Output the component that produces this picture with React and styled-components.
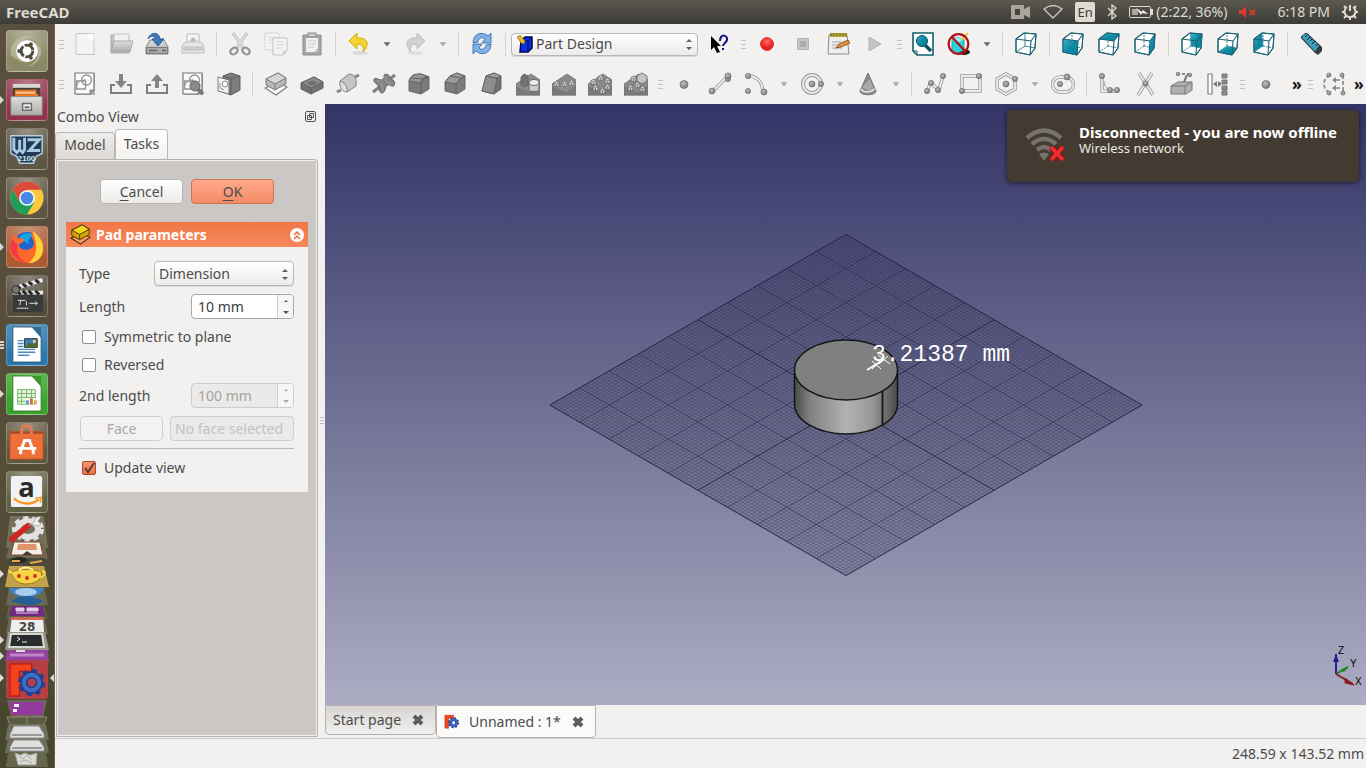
import { useState } from "react";
import styled, { createGlobalStyle, css } from "styled-components";

const GlobalStyle = createGlobalStyle`
  * {
    box-sizing: border-box;
  }

  body {
    margin: 0;
    font-family: "Noto Sans", "Open Sans", sans-serif;
    font-size: 14px;
    line-height: 20px;
    color: #4c4c4c;
    background: #f2f1f0;
  }

  button, input, select {
    font: inherit;
    color: inherit;
  }
`;

const Page = styled.div`
  display: flex;
  flex-direction: column;
  height: 100vh;
  overflow: hidden;
`;

const Desktop = styled.div`
  display: flex;
  flex: 1;
  min-height: 0;
`;

const Main = styled.main`
  display: flex;
  flex-direction: column;
  flex: 1;
  min-width: 0;
`;

/* ---------- top panel ---------- */

const TopBar = styled.header`
  display: flex;
  align-items: center;
  justify-content: space-between;
  height: 24px;
  padding: 0 8px 0 6px;
  color: #dfdbd2;
  background: linear-gradient(#5b594f, #3c3b37);
`;

const AppTitle = styled.h1`
  margin: 0;
  font-size: 15px;
  line-height: 24px;
`;

const Indicators = styled.div`
  display: flex;
  align-items: center;
  gap: 12px;
`;

const Indicator = styled.div`
  display: flex;
  align-items: center;
  gap: 3px;

  svg {
    display: block;
  }
`;

const Clock = styled.time`
  margin-left: 8px;
`;

const LanguageBadge = styled.span`
  width: 20px;
  border-radius: 2px;
  text-align: center;
  font-size: 13px;
  color: #3c3b37;
  background: #dfdbd2;
`;

/* ---------- launcher ---------- */

const Launcher = styled.nav`
  display: flex;
  flex-direction: column;
  gap: 2px;
  width: 55px;
  flex-shrink: 0;
  padding-top: 6px;
  overflow: hidden;
  border-right: 1px solid #7b5a55;
  background: linear-gradient(#5a4f3e, #564d39 60%, #45462c);
`;

const LauncherList = styled.div`
  display: flex;
  flex-direction: column;
  gap: 7px;
`;

const LauncherRow = styled.div`
  display: flex;
  align-items: center;
  height: 42px;
`;

const RunningMark = styled.span`
  width: 6px;
  height: 8px;
  line-height: 0;
`;

const Tile = styled.button`
  width: 42px;
  height: 42px;
  padding: 0;
  border: 1px solid rgba(255, 255, 255, 0.22);
  border-radius: 4px;
  background: radial-gradient(circle at 50% 0, rgba(255, 255, 255, 0.35), transparent 75%) ${(p) => p.$color};

  svg {
    display: block;
    overflow: visible;
  }
`;

const Folded = styled.button`
  display: block;
  width: 54px;
  height: ${(p) => p.$height}px;
  padding: 0;
  border: 0;
  background: none;

  svg {
    display: block;
    overflow: visible;
  }
`;

/* ---------- tool bars ---------- */

const ToolRow = styled.div`
  display: flex;
  align-items: center;
  height: 40px;
  flex-shrink: 0;
  overflow: hidden;
`;

const ToolSection = styled.div`
  display: flex;
  align-items: center;
  flex: ${(p) => (p.$grow ? "1" : "none")};
  min-width: 0;
`;

const ToolButton = styled.button`
  display: flex;
  align-items: center;
  justify-content: center;
  width: ${(p) => (p.$narrow ? "20px" : "36px")};
  height: 36px;
  flex-shrink: 0;
  padding: 0;
  border: 0;
  background: none;
`;

const Grip = styled.span`
  width: 12px;
  height: 9px;
  flex-shrink: 0;
  border: solid transparent;
  border-width: 0 3px 0 4px;
  background: repeating-linear-gradient(#c5c3c1 0 1px, transparent 1px 4px) padding-box;
`;

const Separator = styled.span`
  width: 1px;
  height: 24px;
  margin: 0 5px;
  flex-shrink: 0;
  background: #d3d1cf;
`;

const MoreButton = styled.button`
  width: 14px;
  margin-left: auto;
  padding: 0;
  border: 0;
  font-size: 16px;
  font-weight: bold;
  color: #111;
  background: none;
`;

const raised = css`
  border: 1px solid #b9b6b3;
  border-radius: 4px;
  background: linear-gradient(#ffffff, #ecebe9);
`;

const SelectFrame = styled.div`
  display: flex;
  align-items: center;
  width: ${(p) => p.$width}px;
  height: 25px;
  padding: 0 4px;
  ${raised}
  box-shadow: 0 1px 0 rgba(0, 0, 0, 0.1);

  svg {
    flex-shrink: 0;
  }
`;

const WorkbenchFrame = styled(SelectFrame)`
  margin-right: 3px;
  height: 23px;
`;

const Select = styled.select`
  flex: 1;
  min-width: 0;
  height: 20px;
  padding: 0;
  border: 0;
  appearance: none;
  outline: none;
  background: none;
`;

/* ---------- combo view ---------- */

const Workspace = styled.div`
  display: flex;
  flex: 1;
  min-height: 0;
`;

const ComboView = styled.aside`
  display: flex;
  flex-direction: column;
  width: 263px;
  flex-shrink: 0;
`;

const ComboTitle = styled.div`
  display: flex;
  align-items: center;
  justify-content: space-between;
  height: 25px;
  padding: 0 2px;

  button {
    padding: 0;
    border: 0;
    background: none;
    line-height: 0;
  }
`;

const TabList = styled.div`
  display: flex;
  align-items: flex-end;
  height: 30px;
`;

const PanelTab = styled.button`
  height: ${(p) => (p.$active ? "30px" : "27px")};
  width: ${(p) => (p.$active ? "53px" : "60px")};
  padding: 0 0 2px;
  border: 1px solid #bab7b4;
  border-bottom: 0;
  border-radius: 4px 4px 0 0;
  background: ${(p) => (p.$active ? "linear-gradient(#fff, #f2f1f0)" : "linear-gradient(#efedeb, #dbd8d6)")};
`;

const TaskPane = styled.div`
  flex: 1;
  margin: 0 0 1px 1px;
  padding: 19px 9px;
  border: 1px solid #b5b2af;
  border-top-right-radius: 3px;
  box-shadow: inset 0 0 0 1px #efeeec;
  background: #cac7c4;
`;

const ButtonRow = styled.div`
  display: flex;
  justify-content: center;
  gap: 8px;
  margin-bottom: 18px;
`;

const PushButton = styled.button`
  width: 83px;
  height: 25px;
  padding: 0;
  line-height: 20px;
  ${raised}

  ${(p) =>
    p.$primary &&
    css`
      border-color: #cc7554;
      background: linear-gradient(#ffa98a, #f48c65);
    `}

  &:disabled {
    color: #a9a7a5;
    border-color: #d0cecc;
    background: #f3f2f1;
  }
`;

const Mnemonic = styled.span`
  text-decoration: underline;
  text-underline-offset: 3px;
`;

const TaskBox = styled.section`
  background: #f2f1f0;
`;

const TaskHeader = styled.div`
  display: flex;
  align-items: center;
  gap: 5px;
  height: 25px;
  padding: 0 3px 0 4px;
  color: #fff;
  background: linear-gradient(#f07746, #f6895d);

  h2 {
    flex: 1;
    margin: 0;
    font-size: 14px;
  }

  button {
    padding: 0;
    border: 0;
    background: none;
    line-height: 0;
  }
`;

const Form = styled.form`
  display: flex;
  flex-direction: column;
  gap: 8px;
  padding: 14px 14px 14px 13px;
`;

const Field = styled.div`
  display: flex;
  align-items: center;
  justify-content: space-between;
  height: 25px;
`;

const CheckList = styled.div`
  display: flex;
  flex-direction: column;
  gap: 8px;
`;

const CheckLabel = styled.label`
  display: flex;
  align-items: center;
  gap: 8px;
  height: 20px;
  padding-left: 3px;
`;

const CheckBox = styled.input`
  width: 14px;
  height: 14px;
  margin: 0;
  appearance: none;
  border: 1px solid #8f8c89;
  border-radius: 2px;
  background: #fff;

  &:checked {
    border-color: #a1492a;
    background: url("data:image/svg+xml,%3Csvg xmlns='http://www.w3.org/2000/svg' viewBox='0 0 12 12'%3E%3Cpath d='M2 6l3 4 6-9' fill='none' stroke='%23503a32' stroke-width='2'/%3E%3C/svg%3E"),
      linear-gradient(#f99470, #ee7141);
  }
`;

const SpinFrame = styled.div`
  display: flex;
  width: 103px;
  height: 25px;
  overflow: hidden;
  border: 1px solid ${(p) => (p.$disabled ? "#cfccca" : "#aaa7a4")};
  border-radius: 4px;
  color: ${(p) => (p.$disabled ? "#a5a3a1" : "#3c3c3c")};
  background: ${(p) => (p.$disabled ? "#ebeae8" : "#fff")};
`;

const SpinInput = styled.input`
  flex: 1;
  min-width: 0;
  padding: 0 6px;
  border: 0;
  outline: none;
  background: none;
`;

const SpinButtons = styled.div`
  display: flex;
  flex-direction: column;
  width: 16px;
  border-left: 1px solid #d0cecc;
  background: #f7f6f5;

  button {
    flex: 1;
    padding: 0;
    border: 0;
    background: none;
    line-height: 0;
    min-height: 0;
  }
`;

const FaceRow = styled.div`
  display: flex;
  justify-content: space-between;
  padding-left: 1px;
`;

const FaceInput = styled.input`
  width: 124px;
  height: 25px;
  padding: 0 4px;
  border: 1px solid #cfccca;
  border-radius: 4px;
  background: #ebeae8;

  &::placeholder {
    color: #c3c1bf;
    opacity: 1;
  }
`;

const Rule = styled.hr`
  width: 100%;
  margin: -1px 0 1px;
  border: 0;
  border-top: 1px solid #bcb9b6;
`;

const Splitter = styled.div`
  display: flex;
  align-items: center;
  width: 7px;
  flex-shrink: 0;
`;

const SplitterGrip = styled.span`
  width: 4px;
  height: 8px;
  margin-left: 2px;
  background: repeating-linear-gradient(#c5c3c1 0 1px, transparent 1px 3px);
`;

/* ---------- 3D view ---------- */

const Documents = styled.div`
  display: flex;
  flex-direction: column;
  flex: 1;
  min-width: 0;
`;

const Viewport = styled.div`
  position: relative;
  display: flex;
  align-items: center;
  justify-content: center;
  flex: 1;
  min-height: 0;
  background: linear-gradient(#333366, #acacc3);
`;

const AxisCross = styled.svg`
  position: absolute;
  right: 0;
  bottom: 14px;
`;

const Notification = styled.div`
  position: absolute;
  top: 6px;
  right: 7px;
  display: flex;
  gap: 12px;
  width: 352px;
  height: 72px;
  padding: 14px 18px;
  border-radius: 5px;
  color: #e8e6e2;
  background: #433b32;
  box-shadow: 0 1px 5px rgba(0, 0, 0, 0.6);

  strong {
    display: block;
    font-size: 15px;
    line-height: 17px;
    color: #fff;
    white-space: nowrap;
  }

  p {
    margin: 0;
    font-size: 13px;
    line-height: 15px;
  }
`;

const DocumentTabs = styled.div`
  display: flex;
  height: 33px;
  flex-shrink: 0;
`;

const DocumentTab = styled.div`
  display: flex;
  align-items: center;
  gap: 10px;
  height: ${(p) => (p.$active ? "33px" : "30px")};
  padding: 0 10px 0 7px;
  border: 1px solid #b5b2af;
  border-radius: 0 0 4px 4px;
  background: ${(p) => (p.$active ? "#fafaf9" : "linear-gradient(#d8d5d3, #f0efed)")};

  button {
    display: flex;
    align-items: center;
    gap: 10px;
    padding: 0;
    border: 0;
    background: none;
    white-space: nowrap;
  }
`;

const StatusBar = styled.footer`
  height: 30px;
  flex-shrink: 0;
  padding: 5px 2px 0 0;
  border-top: 1px solid #d0cecc;
  text-align: right;
`;

/* ---------- tool bar drawings ---------- */

const FRONT = "2,7 17,9 16,23 2,20";
const REAR = "10,1 22,2 21,16 11,14";
const CUBE_SIDES = {
  none: "",
  front: FRONT,
  top: "2,7 17,9 22,2 10,1",
  right: "17,9 22,2 21,16 16,23",
  rear: REAR,
  bottom: "2,20 16,23 21,16 11,14",
  left: "2,7 10,1 11,14 2,20",
};

function ViewCube({ side }) {
  return (
    <g fill="none" stroke="#1c6375">
      <path d="M2 7 10 1 22 2 21 16 16 23 2 20z" fill="#fff" />
      <path d="M11 14V1M11 14 21 16M11 14 2 20" strokeWidth="0.8" strokeDasharray={side === "none" ? "none" : "2 1"} />
      <polygon points={CUBE_SIDES[side]} fill="url(#teal)" stroke="none" />
      <path d="M2 7 17 9 16 23M17 9 22 2M2 7 10 1 22 2 21 16 16 23 2 20z" strokeWidth="1.1" />
    </g>
  );
}

function Node({ x, y, r = 2.6 }) {
  return <circle cx={x} cy={y} r={r} fill="url(#node)" stroke="#747474" strokeWidth="0.8" />;
}

// double stroke: dark outline with a pale core
function Tube({ d }) {
  return (
    <g fill="none">
      <path d={d} stroke="#999" strokeWidth="3.4" />
      <path d={d} stroke="#ececeb" strokeWidth="1.8" />
    </g>
  );
}

function SketchPage() {
  return (
    <g>
      <path d="M3 2h19v21H3z" fill="#b5b5b5" />
      <path d="M2 1h19v17l-4 4H2z" fill="#fbfbfb" stroke="#777" strokeWidth="1.2" />
      <path d="M17 22v-4h4z" fill="#aaa" stroke="#777" strokeWidth="0.8" />
      <g fill="none" stroke="#949494" strokeWidth="1.3">
        <circle cx="13.5" cy="8" r="5" />
        <path d="M3.5 9h9v8h-9zM3.5 17c0-7 3-9 9-9" />
      </g>
    </g>
  );
}

function DarkBlock() {
  return (
    <g stroke="#6f6f6f" strokeWidth="0.8" strokeLinejoin="round">
      <path d="M0 12 15 2l9 6v15H0z" fill="#8b8b8b" />
      <path d="m0 15 14 6 10-7v9H0z" fill="#7a7a7a" stroke="#757575" />
    </g>
  );
}

function SmallCube({ x, y }) {
  return (
    <g transform={`translate(${x} ${y})`} stroke="#646464" strokeWidth="0.7">
      <path d="M0 1.5 2.5 0 5 1.5v3L2.5 6 0 4.5z" fill="#d2d2d2" />
      <path d="M0 1.5 2.5 3 5 1.5M2.5 3v3" fill="none" />
    </g>
  );
}

function PadShape({ light, side, line, base }) {
  return (
    <g stroke={line} strokeLinejoin="round">
      <path d="M1 16 12 23 23 15 14 11z" fill={base} strokeWidth="1.2" />
      <path d="M2 7 14 1 22 6v6l-11 6-9-5z" fill={side} />
      <path d="M2 7 14 1 22 6 11 12z" fill={light} />
      <path d="M11 12v6" />
    </g>
  );
}

const icons = {
  newFile: (
    <g>
      <path d="M3 21h19v2H3z" fill="#e2e1e0" />
      <path d="M3 1.5h18v21H3z" fill="#f3f3f2" stroke="#c8c7c5" />
      <circle cx="18" cy="5" r="3.5" fill="#fff" opacity="0.8" />
    </g>
  ),
  open: (
    <g stroke="#aaa">
      <path d="M2 3h7l2 2h9v16H2z" fill="#c0c0c0" />
      <path d="M5 2h15v9H5z" fill="#f1f1f0" stroke="#c2c2c2" />
      <path d="M5 9h19l-3 11H2z" fill="url(#metal)" />
    </g>
  ),
  save: (
    <g>
      <path d="M1 15 5 8h14l4 7v7H1z" fill="url(#metal)" stroke="#858585" />
      <path d="M1.5 15.5h21v6h-21z" fill="#aaa" stroke="#7a7a7a" />
      <path d="M4 18.5h8M17 18.5h4" stroke="#666" strokeWidth="1.6" />
      <path d="M3 7C5 0 14-1 15 7h4l-6 7-6-7h3c0-3-4-4-7 0z" fill="#3f7ab9" stroke="#285a95" />
    </g>
  ),
  print: (
    <g stroke="#bcbbb9">
      <path d="M6 2h12v11H6z" fill="#f5f5f4" />
      <path d="m12 5 4 4h-3v4h-2V9H8z" fill="#bcbbb9" stroke="none" />
      <path d="m1 14 3-4h16l3 4v7H1z" fill="#e7e6e5" />
      <path d="M3 15h18v3H3z" fill="#d0d0cf" />
    </g>
  ),
  cut: (
    <g fill="none">
      <path d="M5 1 16 17M19 1 8 17" stroke="#aaa" strokeWidth="3" />
      <path d="M5 1 16 17M19 1 8 17" stroke="#e4e4e4" strokeWidth="1.6" />
      <ellipse cx="6" cy="19" rx="4" ry="3" stroke="#939393" strokeWidth="2.2" transform="rotate(-35 6 19)" />
      <ellipse cx="18" cy="19" rx="4" ry="3" stroke="#939393" strokeWidth="2.2" transform="rotate(35 18 19)" />
    </g>
  ),
  copy: (
    <g fill="#f4f4f3" stroke="#d6d5d3">
      <path d="M1 1h14v17H1z" />
      <path d="M4 5h8M4 8h8M4 11h8" />
      <path d="M9 6h14v13l-4 4H9z" stroke="#c2c1bf" />
      <path d="M12 10h8M12 13h8M12 16h6" />
      <path d="M19 23v-4h4" fill="#ccc" />
    </g>
  ),
  paste: (
    <g>
      <path d="M3 3h18v20H3z" fill="#a7a7a7" stroke="#8c8c8c" />
      <path d="M6 6h12v14H6z" fill="#efefee" />
      <path d="M8 1h8v4H8z" fill="#c8c8c8" stroke="#888" />
      <path d="M8 9h8M8 12h8M8 15h6" stroke="#ccc" />
      <path d="M14 20h4v-4z" fill="#c0c0c0" />
    </g>
  ),
  undo: (
    <g>
      <ellipse cx="13" cy="21" rx="8" ry="2" fill="#dddbd9" />
      <path d="M10 1v5c11-1 13 7 6 14 1-5 0-8-6-8v5L2 9z" fill="#f3d532" stroke="#d0ab13" strokeLinejoin="round" />
    </g>
  ),
  redo: (
    <g>
      <ellipse cx="12" cy="21" rx="8" ry="2" fill="#e0dfde" />
      <path d="M14 1v5C3 5 1 13 8 20c-1-5 0-8 6-8v5l8-8z" fill="#d2d1d0" stroke="#c0bfbe" strokeLinejoin="round" />
    </g>
  ),
  caret: <path d="M8 10h8l-4 5z" fill="#666" />,
  caretOff: <path d="M8 10h8l-4 5z" fill="#aaa9a8" />,
  refresh: (
    <g fill="#7fb0e6" stroke="#3a71b0" strokeWidth="0.9" strokeLinejoin="round">
      <path d="M3 11C3 1 13-1 18 4l3-3v10h-9l3-4c-3-3-7 0-7 3z" />
      <path d="M21 12c0 10-10 12-15 7l-3 3V12h9l-3 4c3 3 7 0 7-3z" />
    </g>
  ),
  whatsThis: (
    <g>
      <path d="M4 4v14l3-3 3 6 3-1-3-6h4z" fill="#000" />
      <path d="M13 9c0-8 8-6 7-1-.5 3-4 3-4 6M16 16v2" fill="none" stroke="#10108a" strokeWidth="2" />
    </g>
  ),
  record: <circle cx="12" cy="12" r="6.5" fill="url(#record)" stroke="#df3e3e" />,
  stop: (
    <g>
      <path d="M6.5 6.500h11v11h-11z" fill="#c6c5c4" stroke="#b4b3b2" />
      <path d="M9 9h6v6H9z" fill="#aeadac" />
    </g>
  ),
  macro: (
    <g>
      <path d="m2 3-1 19h21L20 3z" fill="#eeeeed" stroke="#8a8a88" />
      <path d="M3 1h17v4H3z" fill="#b8a437" />
      <path d="M4 1v3M7 1v3M10 1v3M13 1v3M16 1v3M19 1v3" stroke="#716423" />
      <path d="M5 10h9M5 13h6M5 16h10" stroke="#aaa" />
      <path d="m9 16 3-4 9-4 2 3-9 4z" fill="#e5953c" stroke="#744214" strokeWidth="0.8" />
    </g>
  ),
  play: <path d="M6 5v14l12-7z" fill="#c6c5c4" stroke="#b4b3b2" />,
  fitAll: (
    <g>
      <path d="M2 1h20v22H6l-4-4z" fill="#fff" stroke="#145d70" strokeWidth="1.6" />
      <path d="M2 19h4v4" fill="none" stroke="#145d70" />
      <path d="m14 13 6 6" stroke="#0b5264" strokeWidth="3.5" />
      <circle cx="11" cy="9" r="5.500" fill="url(#teal)" stroke="#0b5264" />
    </g>
  ),
  drawStyle: (
    <g>
      <ellipse cx="17" cy="20" rx="6" ry="3" fill="#222" />
      <path d="M5 8 9 5l8 2v11l-6 3-6-3z" fill="#29d4dd" stroke="#1b9299" strokeWidth="0.8" />
      <path d="M5 8 9 5l8 2-5 3z" fill="#9ceef2" />
      <path d="m14 8 7-7" stroke="#eacb35" strokeWidth="2" />
      <circle cx="11.500" cy="12" r="9.800" fill="none" stroke="#b51015" strokeWidth="2.2" />
      <path d="M5 5 18 19" stroke="#b51015" strokeWidth="2.2" />
    </g>
  ),
  measure: (
    <g strokeLinejoin="round">
      <path d="m2 6 14 15 3 2 4-4V15L8 1z" fill="#343c3e" />
      <path d="M2 5 7 1l14 13-5 6z" fill="#3f9cba" stroke="#1b4652" />
      <path d="m8 3-2 2m5 0-3 3m5-1-2 2m5 0-3 3m6 0-2 2m4 0-3 3" stroke="#123" />
    </g>
  ),
  sketch: <SketchPage />,
  importTray: (
    <g>
      <path d="M6 13H2v8h20v-8h-4" fill="none" stroke="#7e7e7e" strokeWidth="2" />
      <path d="M10 2h4v7h4l-6 7-6-7h4z" fill="#858585" />
    </g>
  ),
  exportTray: (
    <g>
      <path d="M6 13H2v8h20v-8h-4" fill="none" stroke="#7e7e7e" strokeWidth="2" />
      <path d="M10 16h4V9h4l-6-7-6 7h4z" fill="#858585" />
    </g>
  ),
  viewSketch: (
    <g>
      <SketchPage />
      <path d="m17 17 5 5" stroke="#777" strokeWidth="3.5" />
      <circle cx="14" cy="14" r="5" fill="#8b8b8b" stroke="#666" />
    </g>
  ),
  mapSketch: (
    <g strokeLinejoin="round">
      <path d="M6 4 14 1l9 3v14l-9 5-8-3z" fill="#7d7d7d" stroke="#5f5f5f" />
      <path d="M6 4l8 3 9-3M14 7v16" fill="none" stroke="#5f5f5f" />
      <path d="M1 5 12 8v14L1 19z" fill="#f5f5f5" stroke="#777" />
      <circle cx="8" cy="12" r="3" fill="none" stroke="#8d8d8d" />
      <path d="M3 11v5l4 2" fill="none" stroke="#8d8d8d" />
    </g>
  ),
  pad: <PadShape light="#d5d5d5" side="#b7b7b7" line="#7b7b7b" base="#fff" />,
  pocket: (
    <g stroke="#606060" strokeLinejoin="round">
      <path d="m1 11 13-6 9 5v6l-12 6-10-5z" fill="#727272" />
      <path d="m1 11 13-6 9 5-12 6z" fill="#8c8c8c" />
      <path d="m8 11 5-2 3 2-5 2z" fill="#707070" stroke="#666" />
      <path d="M11 16v6" />
    </g>
  ),
  revolution: (
    <g>
      <path d="m1 20 4-2M19 5l4-2" stroke="#868686" strokeWidth="3" />
      <path d="M4 9 13 2c6 0 8 5 7 12l-9 6c-1-6-2-9-7-11z" fill="#c5c5c5" stroke="#838383" />
      <path d="M4 9c-1 7 3 11 7 11 1-6-2-9-7-11z" fill="#dedede" stroke="#838383" />
    </g>
  ),
  groove: (
    <g stroke="#606060">
      <path d="m1 20 22-17" strokeWidth="3" stroke="#808080" />
      <path d="M12 3c5-3 5 3 10 6 2 4-1 7-4 4-2 0-4-1-5 5-3 6-6 2-6-3-1-3-6-4-5-8 2-2 4 1 7 1 4-1 3-4 3-5z" fill="#858585" />
      <path d="M5 8c3 1 6 5 6 11M13 4c0 4 3 8 7 9" fill="none" stroke="#a4a4a4" />
    </g>
  ),
  fillet: (
    <g stroke="#606060" strokeWidth="0.9" strokeLinejoin="round">
      <path d="M1 9C3 3 6 2 13 2l8 3v12l-8 5-12-3z" fill="#7a7a7a" />
      <path d="M1 9C3 3 6 2 13 2l8 3c-5 0-7 1-8 6z" fill="#969696" />
      <path d="M13 11v11M3 6l13 1M21 5c-5 0-7 1-8 6" fill="none" />
    </g>
  ),
  chamfer: (
    <g stroke="#606060" strokeWidth="0.9" strokeLinejoin="round">
      <path d="M1 10 6 4l7-3 8 3v13l-8 5-12-3z" fill="#7b7b7b" />
      <path d="m1 10 5-6 7-3 8 3-4 2-5 6z" fill="#999" />
      <path d="M12 12v10M6 4l11 2 4-2M17 6l-5 6" fill="none" />
    </g>
  ),
  draft: (
    <g stroke="#606060" strokeWidth="0.9" strokeLinejoin="round">
      <path d="M6 4 14 1l7 3v13l-7 5-12-3z" fill="#727272" />
      <path d="m6 4 11 2-3 16-12-3z" fill="#8d8d8d" />
      <path d="m6 4 8-3 7 3-4 2z" fill="#a1a1a1" />
    </g>
  ),
  mirrored: (
    <g stroke="#606060" strokeWidth="0.9">
      <DarkBlock />
      <path d="M5 5 8 2l4 2v9l-3 2-4-2z" fill="#737373" />
      <path d="M13 11v7c0 2 10 2 10 0v-7" fill="#cbcbcb" />
      <ellipse cx="18" cy="10.500" rx="5" ry="3" fill="#ececec" />
    </g>
  ),
  linear: (
    <g>
      <DarkBlock />
      <SmallCube x={2} y={9} />
      <SmallCube x={10} y={9} />
      <SmallCube x={17} y={8} />
    </g>
  ),
  polar: (
    <g>
      <DarkBlock />
      <SmallCube x={3} y={7} />
      <SmallCube x={10} y={3} />
      <SmallCube x={17} y={6} />
      <SmallCube x={5} y={13} />
      <SmallCube x={12} y={16} />
      <SmallCube x={17} y={12} />
    </g>
  ),
  multi: (
    <g>
      <DarkBlock />
      <path d="m13 4 5-3 5 3v5l-5 3-5-3z" fill="#c4c4c4" stroke="#777" />
      <SmallCube x={7} y={4} />
      <SmallCube x={4} y={13} />
      <SmallCube x={11} y={10} />
      <SmallCube x={16} y={14} />
    </g>
  ),
  point: <Node x={12} y={12.500} r={4} />,
  line: (
    <g>
      <Tube d="M4 20 20 4" />
      <Node x={4} y={19} r={3} />
      <Node x={20} y={7} />
      <Node x={20} y={4} r={3} />
    </g>
  ),
  arc: (
    <g>
      <Tube d="M4 4C12 4 18 9 19 19" />
      <Node x={4} y={4} />
      <Node x={4} y={19} />
      <Node x={20} y={20} r={3} />
    </g>
  ),
  circle: (
    <g>
      <circle cx="12" cy="12" r="9" fill="none" stroke="#999" strokeWidth="4" />
      <circle cx="12" cy="12" r="9" fill="none" stroke="#eee" strokeWidth="2" />
      <Node x={12} y={12} r={3} />
      <Node x={21} y={12} />
    </g>
  ),
  conic: (
    <g>
      <path d="M12 1 4 19c0 5 16 5 16 0z" fill="#8b8b8b" stroke="#757575" />
      <path d="m6 15 8 5 4-2-4-11z" fill="#a9a9a9" />
      <path d="M5 17c3 4 9 4 14 0" stroke="#eee" fill="none" strokeWidth="1.5" />
    </g>
  ),
  polyline: (
    <g>
      <Tube d="m4 19 4-8 8 7 4-14" />
      <Node x={4} y={19} />
      <Node x={8} y={11} />
      <Node x={15} y={18} />
      <Node x={20} y={4} />
    </g>
  ),
  rectangle: (
    <g>
      <Tube d="M3 4h18v15H3z" />
      <Node x={20} y={4} />
      <Node x={3} y={19} />
    </g>
  ),
  polygon: (
    <g>
      <Tube d="m11 2 9 5v10l-9 5-9-5V7z" />
      <Node x={11} y={12} r={3} />
      <Node x={20} y={7} />
    </g>
  ),
  slot: (
    <g>
      <Tube d="M9 5h6a7.500 7.500 0 0 1 0 15H9A7.500 7.500 0 0 1 9 5z" />
      <Node x={9} y={12} />
      <Node x={16} y={5} r={3} />
    </g>
  ),
  filletSketch: (
    <g>
      <Tube d="M4 3v16h17" />
      <path d="M6 9c0 6 4 9 11 9" fill="none" stroke="#999" />
      <Node x={4} y={4} />
      <Node x={12} y={18} />
      <Node x={19} y={18} />
    </g>
  ),
  trim: (
    <g>
      <Tube d="m5 1 14 22M18 1 4 23" />
      <Node x={11.500} y={11.500} />
    </g>
  ),
  external: (
    <g>
      <path d="M7 2h14" stroke="#888" strokeWidth="2" strokeDasharray="3 2" />
      <path d="m17 3-3 7" stroke="#777" strokeWidth="2" />
      <path d="m1 14 7-4h14v8l-6 4H1z" fill="#b1b1b1" stroke="#777" />
      <path d="M1 14h14l7-4M15 14v8" fill="none" stroke="#777" />
      <Node x={8} y={2} r={1.800} />
      <Node x={20} y={3} r={1.800} />
    </g>
  ),
  carbon: (
    <g>
      <path d="M2 2h4v20H2z" fill="#fff" stroke="#808080" strokeWidth="1.2" />
      <path d="m7 12 4-3v6zM16 12l-4-3v6z" fill="#777" />
      <path d="M16 2h5v4h-5zm0 6h5v4h-5zm0 6h5v4h-5zm0 5h5v4h-5z" fill="#8a8a8a" stroke="#757575" />
    </g>
  ),
  constraint: (
    <g>
      <path d="M8 3c-8 4-8 14 0 18M21 3v18" fill="none" stroke="#999" strokeWidth="2" strokeDasharray="4 2" />
      <path d="M11 8h7M11 16h7" stroke="#888" strokeWidth="1.500" />
      <path d="m10 8 4-3v6zm0 8 4-3v6z" fill="#888" />
      <Node x={7} y={3} r={2} />
      <Node x={20} y={3} r={2} />
      <Node x={7} y={21} r={2} />
      <Node x={21} y={21} r={2} />
    </g>
  ),
};

const mainTools = [
  "grip",
  ["newFile", "New"],
  ["open", "Open"],
  ["save", "Save"],
  ["print", "Print"],
  "sep",
  ["cut", "Cut"],
  ["copy", "Copy"],
  ["paste", "Paste"],
  "sep",
  ["undo", "Undo"],
  ["caret", "Undo list"],
  ["redo", "Redo"],
  ["caretOff", "Redo list"],
  "sep",
  ["refresh", "Refresh"],
  "sep",
];

const viewTools = [
  ["whatsThis", "What's this?"],
  "grip",
  ["record", "Record macro"],
  ["stop", "Stop macro"],
  ["macro", "Macros"],
  ["play", "Execute macro"],
  "grip",
  ["fitAll", "Fit all"],
  ["drawStyle", "Draw style"],
  ["caret", "Draw style list"],
  "sep",
  ["cube:none", "Axonometric"],
  "sep",
  ["cube:front", "Front"],
  ["cube:top", "Top"],
  ["cube:right", "Right"],
  "sep",
  ["cube:rear", "Rear"],
  ["cube:bottom", "Bottom"],
  ["cube:left", "Left"],
  "sep",
  ["measure", "Measure distance"],
];

const designTools = [
  "grip",
  ["sketch", "Create sketch"],
  ["importTray", "Edit sketch"],
  ["exportTray", "Leave sketch"],
  ["viewSketch", "View sketch"],
  ["mapSketch", "Map sketch to face"],
  "sep",
  ["pad", "Pad"],
  ["pocket", "Pocket"],
  ["revolution", "Revolution"],
  ["groove", "Groove"],
  ["fillet", "Fillet"],
  ["chamfer", "Chamfer"],
  ["draft", "Draft"],
  ["mirrored", "Mirrored"],
  ["linear", "Linear pattern"],
  ["polar", "Polar pattern"],
  ["multi", "Multi transform"],
  "grip",
  ["point", "Point"],
  ["line", "Line"],
  ["arc", "Arc"],
  ["caretOff", "Arc list"],
  ["circle", "Circle"],
  ["caretOff", "Circle list"],
  ["conic", "Conic"],
  ["caretOff", "Conic list"],
  "sep",
  ["polyline", "Polyline"],
  ["rectangle", "Rectangle"],
  ["polygon", "Polygon"],
  ["caretOff", "Polygon list"],
  ["slot", "Slot"],
  "sep",
  ["filletSketch", "Sketch fillet"],
  ["trim", "Trim edge"],
  ["external", "External geometry"],
  ["carbon", "Construction mode"],
  "grip",
  ["point", "Coincident"],
];

function Tools({ items }) {
  return items.map((item, index) => {
    if (item === "grip") return <Grip key={index} />;
    if (item === "sep") return <Separator key={index} />;
    const [name, label] = item;
    return (
      <ToolButton key={index} type="button" aria-label={label} $narrow={name.startsWith("caret")}>
        <svg width="24" height="24" viewBox="0 0 24 24">
          {name.startsWith("cube:") ? <ViewCube side={name.slice(5)} /> : icons[name]}
        </svg>
      </ToolButton>
    );
  });
}

/* ---------- launcher drawings ---------- */

function FreecadLogo({ size }) {
  return (
    <svg width={size} height={size} viewBox="0 0 36 36">
      <path d="M2 3h21v7H11v6h8v7h-8v11H2z" fill="#f5431f" stroke="#a31d12" />
      <g transform="translate(23 21)" fill="none">
        <circle r="7.500" stroke="#1b3f92" strokeWidth="7" />
        <circle r="11.500" stroke="#1b3f92" strokeWidth="3.500" strokeDasharray="4.500 4.530" />
        <circle r="7.500" stroke="#3f6cc4" strokeWidth="4" />
      </g>
    </svg>
  );
}

const apps = [
  {
    name: "Dash",
    color: "#8c8966",
    art: (
      <g>
        <path d="M4 24C2 8 20 0 32 9c-8-4-16-2-19 5 8-7 20-3 22 6 0-3 1 15-14 16 8-3 12-9 10-14-1 9-12 14-20 7-3-1-6-3-7-5z" fill="#c8c6ab" opacity="0.6" />
        <circle cx="20.500" cy="20.500" r="11" fill="#fff" />
        <circle cx="20.500" cy="20.500" r="6" fill="none" stroke="#504e3e" strokeWidth="3" strokeDasharray="11 1.570" />
        <circle cx="12.500" cy="20.500" r="2" fill="#504e3e" />
        <circle cx="24.500" cy="13.500" r="2" fill="#504e3e" />
        <circle cx="24.500" cy="27.500" r="2" fill="#504e3e" />
      </g>
    ),
  },
  {
    name: "Files",
    color: "#91324a",
    running: true,
    art: (
      <g>
        <path d="M6 4h28v7H6z" fill="#d7d7d6" />
        <path d="M6 8h28v10H6z" fill="#4b4038" />
        <path d="M8 10h22v4h2v5H8z" fill="#e87524" />
        <path d="M9 13h20" stroke="#f4c793" strokeWidth="2" />
        <path d="M4 17h32v19H4z" fill="url(#metal)" stroke="#8c8c8c" />
        <path d="M16 24h9v7h-9z" fill="#eee" stroke="#6b6b6b" strokeWidth="1.500" />
        <path d="M18 28h5" stroke="#666" strokeWidth="2" />
      </g>
    ),
  },
  {
    name: "Warzone 2100",
    color: "#5f5745",
    art: (
      <g>
        <path d="M4 7h32v18l-6 3-3 7H13l-3-7-6-3z" fill="#203b55" stroke="#b7cfdf" strokeWidth="1.500" />
        <path d="M7 9v12l3 3 3-3 3 3 2-3V9M13 11v9M21 11h12L23 22h11" fill="none" stroke="#a9cbe2" strokeWidth="3" />
        <text x="20" y="33" textAnchor="middle" fontFamily="Liberation Sans, sans-serif" fontWeight="bold" fontSize="8" fill="#d7e7f0">2100</text>
      </g>
    ),
  },
  {
    name: "Chrome",
    color: "#5f5745",
    art: (
      <g>
        <circle cx="20.500" cy="20.500" r="17" fill="#fbc93c" />
        <path d="M5.800 12A17 17 0 0 1 35.200 12H20.500L13 24.800z" fill="#dc4a3c" />
        <path d="M5.800 12A17 17 0 0 0 20.500 37.500L28 24.800H13z" fill="#1f9d5b" />
        <circle cx="20.500" cy="20.500" r="8" fill="#fff" />
        <circle cx="20.500" cy="20.500" r="6.500" fill="#4787e8" />
      </g>
    ),
  },
  {
    name: "Firefox",
    color: "#ab5c35",
    running: true,
    art: (
      <g>
        <circle cx="21" cy="20" r="15" fill="#2263cf" />
        <path d="M12 11c5-6 13-6 16-2-6 1-7 5-5 9z" fill="#17a6dd" />
        <path d="M5 12c2-1 2-3 2-5 2 1 4 4 5 5 4-2 6 1 5 3l-5 3c1 7 11 7 15 2 2-7-3-8-2-16 7 5 12 10 12 18 0 10-7 15-15 15C9 37 2 30 3 20z" fill="#ff6a28" />
        <path d="M26 4c7 5 11 10 11 18 0 8-6 15-15 15 8-6 11-16 4-33z" fill="#ffd13a" />
        <path d="M3 20c2 12 11 17 19 17-9-2-13-9-11-19L5 12z" fill="#ef3b4a" />
      </g>
    ),
  },
  {
    name: "Video editor",
    color: "#554c3c",
    art: (
      <g>
        <path d="M6 17h31v20H6z" fill="#393b3b" />
        <path d="m5 11 31-9 1 4L6 15z" fill="#e9e9e9" />
        <path d="m10 10 4 3m2-5 4 3m2-5 4 3m3-5 4 3" stroke="#292929" strokeWidth="3" />
        <path d="M6 15h31v4H6z" fill="#e9e9e9" />
        <path d="m10 15 4 4m2-4 4 4m2-4 4 4m3-4 4 4" stroke="#292929" strokeWidth="3" />
        <circle cx="9" cy="14" r="4" fill="#777" stroke="#282828" />
        <path d="M11 25h8m-5 0-1 5m7-4v4m3-2h8m-2-2 2 2-2 2M10 33h12" stroke="#ddd" fill="none" />
      </g>
    ),
  },
  {
    name: "LibreOffice Writer",
    color: "#2b78ad",
    stacked: true,
    art: (
      <g>
        <path d="M6 2h20l9 10v26H6z" fill="#fff" stroke="#29536f" />
        <path d="M25 2h10v11z" fill="#2f6c98" />
        <path d="M11 16h6m-6 3h6m-6 3h6m-6 3h18m-18 3h18m-18 3h12" stroke="#4a88bd" strokeWidth="1.500" />
        <path d="M18 14h13v9H18z" fill="#3b7fb8" stroke="#333" />
        <path d="m18 22 5-4 4 2 4-3v6H18z" fill="#4e6b31" />
        <circle cx="28" cy="17" r="1.500" fill="#ffd85d" />
      </g>
    ),
  },
  {
    name: "LibreOffice Calc",
    color: "#3aa32d",
    running: true,
    art: (
      <g>
        <path d="M6 2h20l9 10v26H6z" fill="#fff" stroke="#337c29" />
        <path d="M25 2h10v11z" fill="#38962d" />
        <path d="M11 16h18v15H11zM11 20h18M11 24h18M11 28h18M15 16v15M20 16v15M25 16v15" fill="#e9f6e5" stroke="#71b75e" />
        <path d="M19 25h12v6H19z" fill="#fff" />
        <path d="M21 31v-4" stroke="#6395d2" strokeWidth="3" />
        <path d="M25 31v-6" stroke="#ce704b" strokeWidth="3" />
        <path d="M29 31v-4" stroke="#e2a33d" strokeWidth="3" />
      </g>
    ),
  },
  {
    name: "Ubuntu Software",
    color: "#5f583f",
    art: (
      <g>
        <path d="M3 9h34v28H3z" fill="#ed7039" stroke="#c14d21" />
        <path d="M3 10h34" stroke="#a8482b" strokeWidth="2" fill="none" />
        <path d="M15 12V7q0-4 5-4t5 4v5" stroke="#e57855" strokeWidth="3" fill="none" />
        <path d="M14 32v-3l4-11h5l4 11v3M11 26h19" fill="none" stroke="#fff" strokeWidth="3" />
      </g>
    ),
  },
  {
    name: "Amazon",
    color: "#606044",
    art: (
      <g>
        <rect x="4" y="4" width="32" height="32" rx="2" fill="#f2f2f2" />
        <text x="20" y="26" textAnchor="middle" fontFamily="Open Sans, sans-serif" fontWeight="bold" fontSize="28" fill="#2b2b2b">a</text>
        <path d="M7 27c8 7 18 7 26 1" fill="none" stroke="#f79b24" strokeWidth="2.500" />
        <path d="m29 27 6-1-1 6" fill="none" stroke="#f79b24" strokeWidth="1.500" />
      </g>
    ),
  },
];

// tiles folded away at the bottom of the launcher
const foldedApps = [
  {
    name: "System Settings",
    height: 27,
    art: (
      <g>
        <path d="M10 1h34l4 32H6z" fill="#8b8972" opacity="0.6" />
        <ellipse cx="28" cy="14" rx="10" ry="8" fill="none" stroke="#e2e2e0" strokeWidth="6" />
        <ellipse cx="28" cy="14" rx="14" ry="11" fill="none" stroke="#e2e2e0" strokeWidth="4" strokeDasharray="5 4" />
        <path d="m12 24 16-13" stroke="#ce2525" strokeWidth="6" strokeLinecap="round" />
        <path d="m28 11 6-4c1-5 4-6 7-5l-3 4 3 3c-3 3-6 2-9 0z" fill="#ececec" stroke="#888" strokeWidth="0.600" />
      </g>
    ),
  },
  {
    name: "Image viewer",
    height: 15,
    art: (
      <g>
        <path d="M10 1h34l4 16H6z" fill="#6c6955" />
        <path d="M14 0h26l3 13H11z" fill="#f2efe8" stroke="#8a4328" />
        <path d="M18 2h18l1 6H17z" fill="#e2936a" />
        <path d="m22 13 5-4 6 4z" fill="#443c33" />
      </g>
    ),
  },
  {
    name: "Image editor",
    height: 9,
    art: (
      <g>
        <path d="M9 1h36l3 8H6z" fill="#4b4838" />
        <ellipse cx="19" cy="3" rx="8" ry="3" fill="#282624" />
        <path d="M12 4h8M30 6l12-2" stroke="#e7a849" strokeWidth="2" />
      </g>
    ),
  },
  {
    name: "Teapot",
    height: 21,
    running: true,
    art: (
      <g>
        <path d="M9 0h35l5 21H5z" fill="#c0a34c" />
        <path d="M11 7c4-5 26-5 31 0-1 8-8 11-16 11S14 14 11 7z" fill="#f5d445" stroke="#9c7519" />
        <path d="M42 6c5-3 3 6-3 5M12 7 8 5" fill="none" stroke="#f5d445" strokeWidth="2" />
        <path d="M19 4q7-5 14 0" fill="none" stroke="#fff1a0" strokeWidth="2" />
        <circle cx="19" cy="10" r="2" fill="#d62d23" />
        <circle cx="27" cy="12" r="2" fill="#d62d23" />
        <circle cx="35" cy="10" r="2" fill="#d62d23" />
      </g>
    ),
  },
  {
    name: "Mail",
    height: 18,
    art: (
      <g>
        <path d="M9 0h35l4 18H6z" fill="#686853" />
        <path d="M9 1h35C42 13 11 13 9 1z" fill="#3c83c8" />
        <ellipse cx="26" cy="5" rx="11" ry="4" fill="#a9cdec" />
        <path d="M11 14q15-10 32 0-9 8-32 0z" fill="#245f99" />
      </g>
    ),
  },
  {
    name: "Video player",
    height: 12,
    art: (
      <g>
        <path d="M9 0h35l4 14H6z" fill="#5e5d4c" />
        <path d="M12 1h31l2 10H9z" fill="#702a80" />
        <path d="M16 3h8v3h-8zM27 3h11v3H27zM16 8h22" fill="#e3cde8" stroke="#e3cde8" />
      </g>
    ),
  },
  {
    name: "Calendar",
    height: 15,
    art: (
      <g>
        <path d="M9 0h35l4 17H6z" fill="#6c6a57" />
        <path d="M12 0h31l1 15H10z" fill="#eee" />
        <path d="M12 0h31v3H12z" fill="#d66850" />
        <text x="27" y="14" textAnchor="middle" fontFamily="DejaVu Sans, sans-serif" fontWeight="bold" fontSize="12" fill="#454545">28</text>
      </g>
    ),
  },
  {
    name: "Terminal",
    height: 16,
    running: true,
    art: (
      <g>
        <path d="M8 0h37l4 18H5z" fill="#99968a" />
        <path d="M11 2h31l2 13H9z" fill="#292c2c" stroke="#d7d7d2" strokeWidth="2" />
        <path d="m17 5 3 2-3 2M22 10h5" stroke="#eee" fill="none" />
      </g>
    ),
  },
  {
    name: "Archive",
    height: 12,
    running: true,
    art: (
      <g>
        <path d="M7 2h41l1 12H5z" fill="#9442a2" />
        <path d="M10 7h34" stroke="#bd86c2" strokeWidth="3" />
        <path d="M16 3h9" stroke="#ddd" strokeWidth="2" />
      </g>
    ),
  },
];

const lowerApps = [
  {
    name: "Window manager",
    height: 17,
    art: (
      <g>
        <path d="M7 0h40l-4 17H11z" fill="#6b6954" />
        <path d="M9 2h35l-2 13H11z" fill="#933a9d" />
        <path d="M14 4h5v3h-5zM13 9h4v3h-4z" fill="#eee" />
      </g>
    ),
  },
  {
    name: "Workspace switcher",
    height: 8,
    art: <path d="M7 0h40l-3 8H10zM27 0v8" fill="#5b5a42" stroke="#8d8b74" />,
  },
  {
    name: "Disk one",
    height: 14,
    art: (
      <g>
        <path d="M8 0h38l3 15H5z" fill="#6f6e59" />
        <path d="M14 1h25l5 8v4H10V9z" fill="#dedfdf" stroke="#8e8e8e" />
        <path d="M12 10h30" stroke="#9a9a9a" strokeWidth="2" />
      </g>
    ),
  },
  {
    name: "Disk two",
    height: 13,
    art: (
      <g>
        <path d="M8 0h38l3 14H5z" fill="#6f6e59" />
        <path d="M14 1h25l5 7v4H10V8z" fill="#dedfdf" stroke="#8e8e8e" />
        <path d="M12 9h30" stroke="#9a9a9a" strokeWidth="2" />
      </g>
    ),
  },
  {
    name: "Trash",
    height: 15,
    art: (
      <g>
        <path d="M8 0h38l2 15H6z" fill="#67674d" />
        <path d="m15 1 5 2 5-2 5 2 7-2-1 12H18z" fill="#d8dad4" stroke="#9ea09a" />
        <path d="m19 4 4 3 4-4 5 5M20 10l5-2 7 3" fill="none" stroke="#aeb0aa" />
      </g>
    ),
  },
];

function FoldedStack({ items }) {
  return items.map((app) => (
    <Folded key={app.name} type="button" aria-label={app.name} $height={app.height}>
      <svg width="54" height={app.height} viewBox={`0 0 54 ${app.height}`}>
        {app.art}
        {app.running && <path d="m0 4 4 4-4 4z" fill="#ddd" />}
      </svg>
    </Folded>
  ));
}

function LauncherBar() {
  return (
    <Launcher>
      <LauncherList>
        {apps.map((app) => (
          <LauncherRow key={app.name}>
            <RunningMark>
              <svg width="6" height="8" viewBox="0 0 6 8">
                {app.running && <path d="m0 0 4 4-4 4z" fill="#d8d6d2" />}
                {app.stacked && <path d="M0 1h4M0 4h4M0 7h4" stroke="#d8d6d2" strokeWidth="2" />}
              </svg>
            </RunningMark>
            <Tile type="button" aria-label={app.name} $color={app.color}>
              <svg width="40" height="40" viewBox="0 0 41 41">
                {app.art}
              </svg>
            </Tile>
          </LauncherRow>
        ))}
      </LauncherList>
      <div>
        <FoldedStack items={foldedApps} />
        <Folded type="button" aria-label="FreeCAD" $height={40}>
          <svg width="54" height="40" viewBox="0 0 54 40">
            <rect x="6" width="42" height="39" rx="3" fill="#b63f45" />
            <path d="m0 14 4 4-4 4zM54 14l-4 4 4 4z" fill="#ddd" />
            <g transform="translate(8 1)">
              <FreecadLogo size={37} />
            </g>
          </svg>
        </Folded>
        <FoldedStack items={lowerApps} />
      </div>
    </Launcher>
  );
}

/* ---------- small shared drawings ---------- */

function UpDown() {
  return (
    <svg width="8" height="14" viewBox="0 0 8 14">
      <path d="M1 5h6L4 2zM1 10h6l-3 3z" fill="#5f5f5f" />
    </svg>
  );
}

function CloseIcon() {
  return (
    <svg width="14" height="14" viewBox="0 0 14 14">
      <path d="m3 3 8 8M11 3l-8 8" stroke="#5d5d5d" strokeWidth="4" />
    </svg>
  );
}

function SpinBox({ id, value, disabled }) {
  return (
    <SpinFrame $disabled={disabled}>
      <SpinInput id={id} type="text" defaultValue={value} disabled={disabled} />
      <SpinButtons>
        <button type="button" aria-label="Increase" disabled={disabled}>
          <svg width="8" height="4" viewBox="0 0 8 4">
            <path d="M2 3h4L4 1z" fill={disabled ? "#aaa" : "#555"} />
          </svg>
        </button>
        <button type="button" aria-label="Decrease" disabled={disabled}>
          <svg width="8" height="4" viewBox="0 0 8 4">
            <path d="M1 0h6L4 3z" fill={disabled ? "#aaa" : "#555"} />
          </svg>
        </button>
      </SpinButtons>
    </SpinFrame>
  );
}

/* ---------- scene ---------- */

// isometric grid, centred on the origin: 100 cells per side
const HALF_W = 296;
const HALF_H = 170.5;

function gridPath(step) {
  let d = "";
  for (let i = 0; i <= 100; i += step) {
    const x = (HALF_W * i) / 100;
    const y = (HALF_H * i) / 100;
    d += `M${-HALF_W + x} ${-y}L${x} ${HALF_H - y}`;
    d += `M${-HALF_W + x} ${y}L${x} ${-HALF_H + y}`;
  }
  return d;
}

function Scene() {
  return (
    <svg width="592" height="342" viewBox="-296 -171 592 342">
      <defs>
        <linearGradient id="teal" x1="0" y1="0" x2="1" y2="1">
          <stop offset="0" stopColor="#4bb0c6" />
          <stop offset="0.5" stopColor="#0c8aa4" />
          <stop offset="1" stopColor="#0a849d" />
        </linearGradient>
        <linearGradient id="metal" x1="0" y1="0" x2="0" y2="1">
          <stop offset="0" stopColor="#dededd" />
          <stop offset="1" stopColor="#acacab" />
        </linearGradient>
        <radialGradient id="node" cx="0.4" cy="0.35">
          <stop offset="0" stopColor="#c2c2c2" />
          <stop offset="1" stopColor="#858585" />
        </radialGradient>
        <radialGradient id="record" cx="0.5" cy="0.3">
          <stop offset="0" stopColor="#ff6a6a" />
          <stop offset="1" stopColor="#e71d1d" />
        </radialGradient>
        <linearGradient id="wall">
          <stop offset="0" stopColor="#4a4a4a" />
          <stop offset="0.15" stopColor="#808080" />
          <stop offset="0.5" stopColor="#b2b2b2" />
          <stop offset="0.75" stopColor="#999" />
          <stop offset="1" stopColor="#494949" />
        </linearGradient>
      </defs>
      <path d="M-296 0 0-170.500 296 0 0 170.500z" fill="#33334f" opacity="0.12" />
      <path d={gridPath(1)} stroke="#2c2c4a" strokeWidth="1" opacity="0.34" />
      <path d={gridPath(10)} stroke="#28284a" strokeWidth="1" opacity="0.5" />
      <path d={gridPath(50)} stroke="#1f1f40" strokeWidth="1" opacity="0.55" />
      <path d="M-51.500 -35V-1a51.500 30 0 0 0 103 0v-34z" fill="url(#wall)" stroke="#151515" strokeWidth="1.500" />
      <ellipse cy="-35" rx="51.500" ry="30" fill="#808080" stroke="#151515" strokeWidth="1.500" />
      <path d="M36.500-14v34" stroke="#151515" strokeWidth="1.800" />
      <path d="M21-35 37-45" stroke="#fff" strokeWidth="2" />
      <path d="m26-44 9 8m0-8-9 8M32-50l12 9m-2-8-9 8" stroke="#fff" />
      <text x="26" y="-44" fontFamily="Liberation Mono, monospace" fontSize="23" fill="#fff">
        3.21387 mm
      </text>
    </svg>
  );
}

const SceneFrame = styled.div`
  line-height: 0;
`;

export default function App() {
  const [tab, setTab] = useState("Tasks");

  return (
    <Page>
      <GlobalStyle />
      <TopBar>
        <AppTitle>FreeCAD</AppTitle>
        <Indicators>
          <Indicator>
            <svg width="20" height="14" viewBox="0 0 20 14">
              <path d="M0 0h13v4l6-3v12l-6-3v4H0z" fill="#a8a59c" />
              <path d="M4 4h5v6H4z" fill="#45433e" />
            </svg>
          </Indicator>
          <Indicator>
            <svg width="20" height="14" viewBox="0 0 20 14">
              <path d="M1 4Q10-3 19 4l-9 9z" fill="none" stroke="#cbc8bf" strokeWidth="1.300" />
            </svg>
          </Indicator>
          <LanguageBadge>En</LanguageBadge>
          <Indicator>
            <svg width="10" height="16" viewBox="0 0 10 16">
              <path d="m1 4 8 8-4 3V1l4 3-8 8" fill="none" stroke="#dfdbd2" strokeWidth="1.300" />
            </svg>
          </Indicator>
          <Indicator>
            <svg width="24" height="12" viewBox="0 0 24 12">
              <rect x="0.500" y="0.500" width="21" height="11" rx="1" fill="none" stroke="#dfdbd2" />
              <path d="M22 3h2v6h-2z" fill="#dfdbd2" />
              <path d="M3 3h6v6H3z" fill="#aaa79e" />
              <path d="m7 2 6 4 1-2 5 4-6-1-1 2z" fill="#fff" />
            </svg>
            (2:22, 36%)
          </Indicator>
          <Indicator>
            <svg width="18" height="12" viewBox="0 0 18 12">
              <path d="M0 4h3l4-4v12L3 8H0z" fill="#df382c" />
              <path d="m11 4 5 5m0-5-5 5" stroke="#df382c" strokeWidth="1.800" />
            </svg>
          </Indicator>
          <Clock>6:18 PM</Clock>
          <Indicator>
            <svg width="16" height="16" viewBox="0 0 16 16">
              <path d="M5 3a5.500 5.500 0 1 0 6 0M8 1v6" fill="none" stroke="#dfdbd2" strokeWidth="2" />
              <path d="M0 8h2m12 0h2M2 2l2 2m10-2-2 2M2 14l2-2m10 2-2-2m-4 2v2" stroke="#dfdbd2" strokeWidth="2" />
            </svg>
          </Indicator>
        </Indicators>
      </TopBar>

      <Desktop>
        <LauncherBar />
        <Main>
          <ToolRow>
            <Tools items={mainTools} />
            <WorkbenchFrame $width={187}>
              <svg width="20" height="18" viewBox="0 0 20 18">
                <path d="M5 6 9 2h7v11l-4 4H4z" fill="#0731df" stroke="#020650" strokeWidth="1.500" />
                <path d="M12 6v10M5 6h7l4-4" fill="none" stroke="#020650" />
                <path d="m1 2 3-2 5 6-1 3-3-1z" fill="#edb125" stroke="#79662f" strokeWidth="0.600" />
              </svg>
              <Select aria-label="Workbench" defaultValue="Part Design">
                <option>Part Design</option>
              </Select>
              <UpDown />
            </WorkbenchFrame>
            <Tools items={viewTools} />
          </ToolRow>
          <ToolRow>
            <ToolSection $grow>
              <Tools items={designTools} />
              <MoreButton type="button">»</MoreButton>
            </ToolSection>
            <ToolSection>
              <Tools items={["grip", ["constraint", "Symmetric constraint"]]} />
              <MoreButton type="button">»</MoreButton>
            </ToolSection>
          </ToolRow>

          <Workspace>
            <ComboView>
              <ComboTitle>
                <span>Combo View</span>
                <button type="button" aria-label="Float panel">
                  <svg width="11" height="11" viewBox="0 0 11 11">
                    <rect x="0.500" y="0.500" width="10" height="10" rx="1.500" fill="none" stroke="#555" />
                    <path d="M4.500 2.500h4v4h-4zM2.500 4.500h4v4h-4z" fill="none" stroke="#555" />
                  </svg>
                </button>
              </ComboTitle>
              <TabList role="tablist">
                {["Model", "Tasks"].map((name) => (
                  <PanelTab
                    key={name}
                    type="button"
                    role="tab"
                    aria-selected={tab === name}
                    $active={tab === name}
                    onClick={() => setTab(name)}
                  >
                    {name}
                  </PanelTab>
                ))}
              </TabList>
              <TaskPane>
                <ButtonRow>
                  <PushButton type="button">
                    <Mnemonic>C</Mnemonic>ancel
                  </PushButton>
                  <PushButton type="button" $primary>
                    <Mnemonic>O</Mnemonic>K
                  </PushButton>
                </ButtonRow>
                <TaskBox>
                  <TaskHeader>
                    <svg width="21" height="21" viewBox="0 0 24 24">
                      <PadShape light="#f3d51b" side="#d3a609" line="#3d2e05" base="#f79a6e" />
                    </svg>
                    <h2>Pad parameters</h2>
                    <button type="button" aria-label="Collapse">
                      <svg width="16" height="16" viewBox="0 0 16 16">
                        <circle cx="8" cy="8" r="7" fill="#fff" />
                        <path d="m5 8 3-3 3 3m-6 4 3-3 3 3" fill="none" stroke="#ed6b39" strokeWidth="1.500" />
                      </svg>
                    </button>
                  </TaskHeader>
                  <Form>
                    <Field>
                      <label htmlFor="type">Type</label>
                      <SelectFrame $width={140}>
                        <Select id="type" defaultValue="Dimension">
                          <option>Dimension</option>
                        </Select>
                        <UpDown />
                      </SelectFrame>
                    </Field>
                    <Field>
                      <label htmlFor="length">Length</label>
                      <SpinBox id="length" value="10 mm" />
                    </Field>
                    <CheckList>
                      <CheckLabel>
                        <CheckBox type="checkbox" />
                        Symmetric to plane
                      </CheckLabel>
                      <CheckLabel>
                        <CheckBox type="checkbox" />
                        Reversed
                      </CheckLabel>
                    </CheckList>
                    <Field>
                      <label htmlFor="length2">2nd length</label>
                      <SpinBox id="length2" value="100 mm" disabled />
                    </Field>
                    <FaceRow>
                      <PushButton type="button" disabled>
                        Face
                      </PushButton>
                      <FaceInput type="text" aria-label="Face" placeholder="No face selected" disabled />
                    </FaceRow>
                    <Rule />
                    <CheckLabel>
                      <CheckBox type="checkbox" defaultChecked />
                      Update view
                    </CheckLabel>
                  </Form>
                </TaskBox>
              </TaskPane>
            </ComboView>
            <Splitter>
              <SplitterGrip />
            </Splitter>

            <Documents>
              <Viewport>
                <SceneFrame>
                  <Scene />
                </SceneFrame>
                <AxisCross width="40" height="46" viewBox="0 0 40 46">
                  <path d="M10 29V9" stroke="#20208c" strokeWidth="2" />
                  <path d="m7 17 3-8 3 8z" fill="#20208c" />
                  <path d="m10 29 12-7" stroke="#1c831e" strokeWidth="2" />
                  <path d="m14 25 9-4-5 6z" fill="#1c831e" />
                  <path d="m10 29 17 10" stroke="#8c1d22" strokeWidth="2" />
                  <path d="m19 33 9 7-9-2z" fill="#8c1d22" stroke="#8c1d22" />
                  <g fontFamily="Liberation Sans, sans-serif" fontSize="10" fill="#000">
                    <text x="12" y="9">Z</text>
                    <text x="24" y="22">Y</text>
                    <text x="29" y="40">X</text>
                  </g>
                </AxisCross>
                <Notification role="status">
                  <svg width="42" height="42" viewBox="0 0 42 42">
                    <g fill="none" stroke="#77726b" strokeWidth="4.500">
                      <path d="M2 14Q19-1 36 14" />
                      <path d="M7 20q12-10 24 0" />
                      <path d="M12 26q7-6 14 0" />
                    </g>
                    <path d="m14 30 5 7 5-7q-5-3-10 0z" fill="#77726b" />
                    <path d="m26 23 12 13M38 23 26 36" stroke="#831515" strokeWidth="6" />
                    <path d="m26 23 12 13M38 23 26 36" stroke="#ef2d2d" strokeWidth="4" />
                  </svg>
                  <div>
                    <strong>Disconnected - you are now offline</strong>
                    <p>Wireless network</p>
                  </div>
                </Notification>
              </Viewport>
              <DocumentTabs>
                <DocumentTab>
                  <button type="button">Start page</button>
                  <button type="button" aria-label="Close Start page">
                    <CloseIcon />
                  </button>
                </DocumentTab>
                <DocumentTab $active>
                  <button type="button">
                    <FreecadLogo size={15} />
                    Unnamed : 1*
                  </button>
                  <button type="button" aria-label="Close Unnamed">
                    <CloseIcon />
                  </button>
                </DocumentTab>
              </DocumentTabs>
            </Documents>
          </Workspace>
          <StatusBar>248.59 x 143.52 mm</StatusBar>
        </Main>
      </Desktop>
    </Page>
  );
}
